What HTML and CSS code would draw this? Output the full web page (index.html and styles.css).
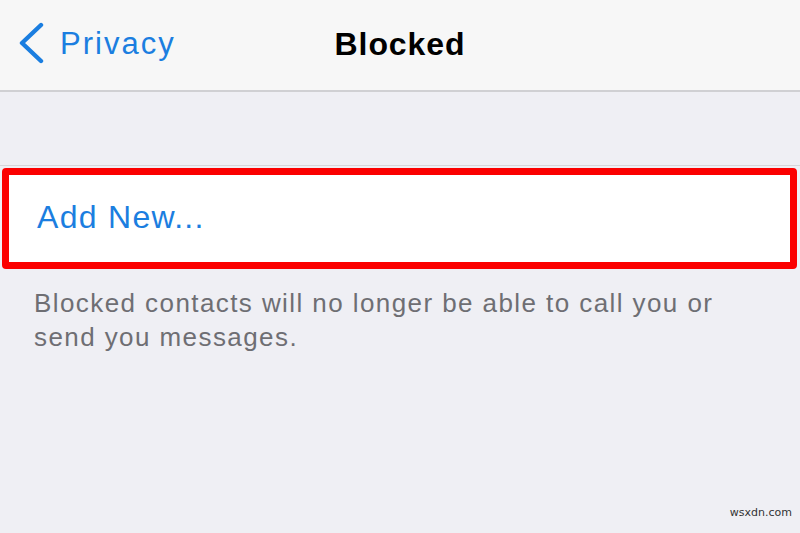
FILE: index.html
```html
<!DOCTYPE html>
<html lang="en">
<head>
<meta charset="utf-8">
<title>Blocked</title>
<link rel="stylesheet" href="styles.css">
</head>
<body>
<div class="screen">
  <header class="nav">
    <a class="back" href="#">
      <svg class="chev" width="28" height="44" viewBox="0 0 28 44" aria-hidden="true">
        <path d="M23 3 L4 21 L23 39" fill="none" stroke="currentColor" stroke-width="4.4" stroke-linecap="round" stroke-linejoin="round"/>
      </svg>
      <span class="back-label">Privacy</span>
    </a>
    <h1 class="title">Blocked</h1>
    <div class="nav-right"></div>
  </header>
  <main class="content">
    <div class="group">
      <div class="cell">
        <span class="cell-link">Add New...</span>
      </div>
    </div>
    <p class="footer-note">Blocked contacts will no longer be able to call you or send you messages.</p>
  </main>
  <span class="watermark">wsxdn.com</span>
</div>
</body>
</html>
```

FILE: styles.css
```css
* { box-sizing: border-box; }

html, body {
  margin: 0;
  padding: 0;
}

body {
  background: #efeff4;
  font-family: "Liberation Sans", Arial, sans-serif;
}

.screen {
  position: relative;
  width: 800px;
  height: 533px;
  overflow: hidden;
  background: #efeff4;
}

.nav {
  display: grid;
  grid-template-columns: 1fr auto 1fr;
  align-items: center;
  height: 92px;
  padding: 24px 0 26px;
  background: #f7f7f7;
  border-bottom: 2px solid #d0d0d3;
}

.back {
  display: flex;
  align-items: center;
  gap: 14px;
  padding-left: 18px;
  height: 40px;
  color: #1b7ee0;
  text-decoration: none;
}

.chev {
  display: block;
  flex: none;
}

.back-label {
  font-size: 31px;
  line-height: 40px;
  letter-spacing: 2px;
}

.title {
  margin: 0;
  font-size: 32px;
  line-height: 40px;
  font-weight: 700;
  letter-spacing: 0.9px;
  color: #000;
}

.content {
  padding-top: 73px;
}

.group {
  border-top: 1px solid #d6d6da;
  padding-top: 2px;
}

.cell {
  margin: 0 3px 0 2px;
  height: 101px;
  padding: 22px 0 0 28px;
  background: #fff;
  border: 7px solid #fb0000;
  border-radius: 4px;
}

.cell-link {
  display: block;
  font-size: 32px;
  line-height: 40px;
  letter-spacing: 1.3px;
  color: #1b7ee0;
}

.footer-note {
  margin: 17px 0 0;
  padding: 0 50px 0 34px;
  font-size: 26px;
  line-height: 34px;
  letter-spacing: 1.42px;
  color: #6e6e73;
}

.watermark {
  position: absolute;
  right: 8px;
  bottom: 14px;
  font-family: "DejaVu Sans", sans-serif;
  font-size: 11px;
  color: #333;
}
```
